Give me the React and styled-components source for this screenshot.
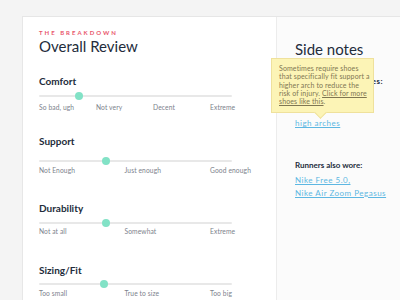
import React from "react";
import styled, { createGlobalStyle } from "styled-components";

const Global = createGlobalStyle`
  html, body { margin: 0; padding: 0; }
  body {
    background: #f4f4f4;
    font-family: Lato, "Open Sans", sans-serif;
    width: 400px;
    height: 300px;
    overflow: hidden;
  }
`;

const Page = styled.div`
  padding: 16px 0 0 22px;
`;

const Frame = styled.div`
  display: flex;
  border-top: 1px solid #e6e6e6;
  height: 290px;
`;

const Card = styled.section`
  width: 254px;
  flex: none;
  box-sizing: border-box;
  background: #ffffff;
  border-left: 1px solid #e7e7e7;
  padding: 12px 44px 0 16px;
`;

const Eyebrow = styled.div`
  font-size: 6px;
  line-height: 8px;
  font-weight: 700;
  letter-spacing: 2px;
  color: #e8566b;
`;

const Title = styled.h1`
  margin: 0;
  font-size: 15px;
  line-height: 18px;
  font-weight: 400;
  color: #232c3b;
`;

const Section = styled.div`
  margin-top: ${(p) => p.$top}px;
`;

const Heading = styled.h2`
  margin: 0;
  font-size: 10px;
  line-height: 12px;
  font-weight: 700;
  color: #232c3b;
`;

const Slider = styled.div`
  position: relative;
  height: 8px;
  margin-top: ${(p) => p.$lead}px;
  &::before {
    content: "";
    position: absolute;
    left: 0;
    right: 0;
    top: 3px;
    height: 2px;
    background: #e8e8e8;
    border-radius: 1px;
  }
`;

const Knob = styled.span`
  position: absolute;
  top: 0;
  width: 8px;
  height: 8px;
  margin-left: -4px;
  border-radius: 50%;
  background: #82e2c6;
`;

const Labels = styled.div`
  display: grid;
  grid-template-columns: repeat(${(p) => p.$count - 1}, 1fr) 22px;
  margin-top: ${(p) => p.$trail}px;
  font-size: 6.7px;
  line-height: 9px;
  letter-spacing: 0.1px;
  color: #7c828c;
  white-space: nowrap;
`;

const Side = styled.aside`
  position: relative;
  flex: 1;
  background: #fbfbfb;
  border-left: 1px solid #ececec;
  padding: 23px 0 0 18px;
`;

const SideTitle = styled.h2`
  margin: 0;
  font-size: 15px;
  line-height: 18px;
  font-weight: 400;
  color: #232c3b;
`;

const SideHeading = styled.h3`
  margin: ${(p) => p.$top}px 0 0;
  font-size: 8px;
  line-height: 10px;
  font-weight: 700;
  letter-spacing: ${(p) => p.$spacing || 0}px;
  color: #232c3b;
  white-space: nowrap;
`;

const LinkList = styled.div`
  display: flex;
  flex-direction: column;
  gap: 2.7px;
  margin-top: ${(p) => p.$top}px;
`;

const Link = styled.a`
  font-size: 8px;
  line-height: 10px;
  letter-spacing: 0.5px;
  color: #5db7e2;
  text-decoration: underline;
`;

const Tooltip = styled.div`
  position: absolute;
  left: -6px;
  top: 41px;
  width: 103px;
  box-sizing: border-box;
  padding: 5px 4px 6px 7px;
  background: #fcf4b6;
  border: 1px solid #efe19c;
  font-size: 7px;
  line-height: 8.35px;
  letter-spacing: 0.12px;
  color: #7f7652;
  &::after {
    content: "";
    position: absolute;
    left: 44px;
    bottom: -5px;
    width: 8px;
    height: 8px;
    background: #fcf4b6;
    border-right: 1px solid #efe19c;
    border-bottom: 1px solid #efe19c;
    transform: rotate(45deg);
  }
`;

const TipLine = styled.span`
  display: block;
  white-space: nowrap;
`;

const TipLink = styled.span`
  text-decoration: underline;
`;

const ratings = [
  { name: "Comfort", top: 20, lead: 5, trail: 2.5, value: 20.6, labels: ["So bad, ugh", "Not very", "Decent", "Extreme"] },
  { name: "Support", top: 23.5, lead: 10, trail: 0.6, value: 34.5, labels: ["Not Enough", "Just enough", "Good enough"] },
  { name: "Durability", top: 27, lead: 5, trail: 0.5, value: 34.5, labels: ["Not at all", "Somewhat", "Extreme"] },
  { name: "Sizing/Fit", top: 28, lead: 3.6, trail: 1, value: 33.5, labels: ["Too small", "True to size", "Too big"] },
];

export default function App() {
  return (
    <>
      <Global />
      <Page>
        <Frame>
          <Card>
            <Eyebrow>THE BREAKDOWN</Eyebrow>
            <Title>Overall Review</Title>
            {ratings.map((r) => (
              <Section key={r.name} $top={r.top}>
                <Heading>{r.name}</Heading>
                <Slider $lead={r.lead}>
                  <Knob style={{ left: `${r.value}%` }} />
                </Slider>
                <Labels $trail={r.trail} $count={r.labels.length}>
                  {r.labels.map((l) => (
                    <span key={l}>{l}</span>
                  ))}
                </Labels>
              </Section>
            ))}
          </Card>
          <Side>
            <SideTitle>Side notes</SideTitle>
            <SideHeading $top={18} $spacing={0.55}>Good for these types:</SideHeading>
            <LinkList $top={32}>
              <Link>high arches</Link>
            </LinkList>
            <SideHeading $top={32}>Runners also wore:</SideHeading>
            <LinkList $top={5}>
              <Link>Nike Free 5.0,</Link>
              <Link>Nike Air Zoom Pegasus</Link>
            </LinkList>
            <Tooltip>
              <TipLine>Sometimes require shoes</TipLine>
              <TipLine>that specifically fit support a</TipLine>
              <TipLine>higher arch to reduce the</TipLine>
              <TipLine>
                risk of injury. <TipLink>Click for more</TipLink>
              </TipLine>
              <TipLine>
                <TipLink>shoes like this</TipLink>.
              </TipLine>
            </Tooltip>
          </Side>
        </Frame>
      </Page>
    </>
  );
}
